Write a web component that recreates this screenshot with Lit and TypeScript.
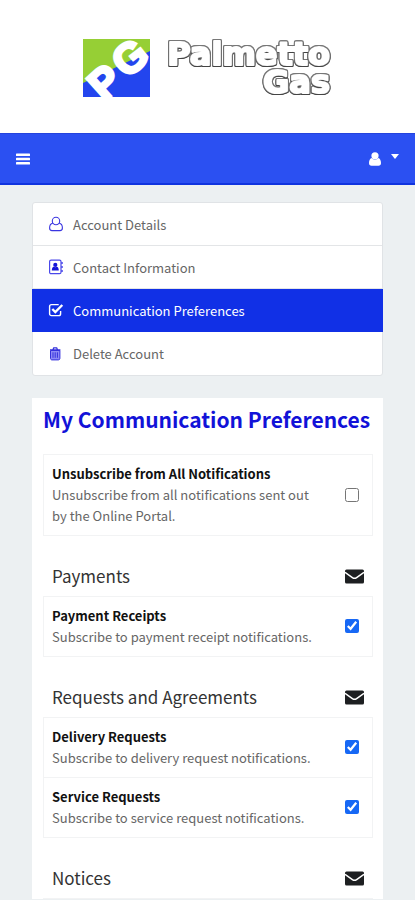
import { LitElement, html, css, svg, TemplateResult } from "lit";
import { customElement, property } from "lit/decorators.js";

const icons: Record<string, TemplateResult> = {
  bars: html`<svg width="14" height="12" viewBox="0 0 14 12" fill="#fff" aria-hidden="true">
    <rect width="14" height="2.6" rx=".6" y=".4"/><rect width="14" height="2.6" rx=".6" y="4.7"/><rect width="14" height="2.6" rx=".6" y="9"/></svg>`,
  user: html`<svg width="14" height="16" viewBox="0 0 14 16" fill="#fff" aria-hidden="true">
    <circle cx="7" cy="4.8" r="3.6"/><path d="M3.8 7C2 7.4 1 9.3 1 12c0 1.700.9 2.800 2.500 2.800h7c1.600 0 2.500-1.100 2.500-2.800 0-2.700-1-4.600-2.800-5C9.400 8 8.300 8.700 7 8.700S4.600 8 3.800 7z"/></svg>`,
  userOutline: html`<svg width="16" height="16" viewBox="0 0 16 16" fill="none" stroke="#3a35e0" stroke-width="1.1" aria-hidden="true">
    <circle cx="8" cy="5" r="3.700"/><path d="M4.800 7.200C2.700 7.500 1.600 9.400 1.600 12c0 1.600.9 2.600 2.400 2.600h8c1.500 0 2.400-1 2.400-2.600 0-2.600-1.100-4.500-3.200-4.800"/></svg>`,
  contact: html`<svg width="16" height="16" viewBox="0 0 16 16" aria-hidden="true">
    <rect x="1.600" y="1.100" width="11.400" height="13.600" rx="1.500" fill="#fff" stroke="#4a48ea" stroke-width="1.200"/>
    <path d="M14 3v2M14 7v2M14 11v2" stroke="#4a48ea" stroke-width="1.500"/>
    <circle cx="7.300" cy="5.900" r="2.100" fill="#1414d8"/><path d="M3.800 11.400c0-2.300.9-3.500 2-3.700.9.600 2.100.6 3 0 1.100.2 2 1.400 2 3.700z" fill="#1414d8"/></svg>`,
  check: html`<svg width="16" height="16" viewBox="0 0 16 16" fill="none" stroke="#fff" aria-hidden="true">
    <path d="M12.600 9v2.700c0 1.100-.8 1.900-1.900 1.900H3.500c-1.100 0-1.900-.8-1.900-1.900V4.500c0-1.100.8-1.900 1.900-1.900h7.200" stroke-width="1.400"/>
    <path d="M4.300 7l3 3 7-7" stroke-width="2.400"/></svg>`,
  trash: html`<svg width="16" height="16" viewBox="0 0 16 16" aria-hidden="true">
    <path d="M2 3.800h10.400M5 3.500l.7-1.600h3l.7 1.600" fill="none" stroke="#3430dc" stroke-width="1.200"/>
    <path d="M2.500 4.500h9.400v7.800c0 1-.6 1.600-1.500 1.600H4c-.9 0-1.500-.6-1.500-1.600z" fill="#8c8af4" stroke="#3430dc"/>
    <path d="M5 6.300v5.500M7.200 6.300v5.500M9.400 6.300v5.500" stroke="#3430dc"/></svg>`,
  mail: html`<svg class="mail" width="19" height="15" viewBox="0 0 19 15" role="img" aria-label="Email">
    <rect y=".5" width="19" height="14" rx="1.500" fill="#1d1f21"/>
    <path d="M0 3.300l7.400 5.300c1.400 1 2.800 1 4.200 0L19 3.300" fill="none" stroke="#fff" stroke-width="1.500"/></svg>`,
};

interface Option { title: string; text: string; on: boolean; }
interface Group { heading: string; options: Option[]; }

const unsubscribe: Option[] = [
  { title: "Unsubscribe from All Notifications", text: "Unsubscribe from all notifications sent out by the Online Portal.", on: false },
];
const groups: Group[] = [
  { heading: "Payments", options: [
    { title: "Payment Receipts", text: "Subscribe to payment receipt notifications.", on: true }] },
  { heading: "Requests and Agreements", options: [
    { title: "Delivery Requests", text: "Subscribe to delivery request notifications.", on: true },
    { title: "Service Requests", text: "Subscribe to service request notifications.", on: true }] },
  { heading: "Notices", options: [] },
];
const menu = [
  { icon: "userOutline", label: "Account Details" },
  { icon: "contact", label: "Contact Information" },
  { icon: "check", label: "Communication Preferences", active: true },
  { icon: "trash", label: "Delete Account" },
];

@customElement("brand-logo")
class BrandLogo extends LitElement {
  static styles = css`
    :host { display: flex; justify-content: center; }
    svg { display: block; overflow: visible; }
    .words { filter: drop-shadow(1px 0 0 #777) drop-shadow(-1px 0 0 #777) drop-shadow(0 1px 0 #444) drop-shadow(0 -1px 0 #777); }
    .word { font: 700 32px "DejaVu Sans", Verdana, sans-serif; fill: #fff; stroke: #fff; stroke-width: 2px; stroke-linejoin: round; }
    .mark { font: 700 42px "Liberation Sans", Arial, sans-serif; fill: #fff; stroke: #fff; stroke-width: 3px; }
  `;
  render() {
    return html`<svg width="252" height="62" viewBox="0 0 252 62" role="img" aria-label="Palmetto Gas">
      <rect x="1" y="1" width="67" height="58" fill="#96cf35"/>
      <path d="M1 45L68 13V59H1z" fill="#2345ee"/>
      <text class="mark" transform="translate(22 64) rotate(-42)">P</text>
      <text class="mark" transform="translate(44 41) rotate(-38)">G</text>
      <g class="words">
        ${[["Palmetto", 27], ["Gas", 55]].map(([t, y]) => svg`
          <text class="word" x="248" y=${y} text-anchor="end">${t}</text>`)}
      </g>
    </svg>`;
  }
}

@customElement("preference-list")
class PreferenceList extends LitElement {
  @property({ attribute: false }) options: Option[] = [];
  static styles = css`
    :host { display: block; border: 1px solid #f2f3f4; }
    :host([open]) { border-bottom: 0; }
    .row { display: flex; align-items: center; gap: 12px; padding: 8px 13px 9px 8px; }
    .row + .row { border-top: 1px solid #f2f3f4; }
    .copy { flex: 1; min-width: 0; padding-right: 10px; line-height: 21px; font-size: 13px; color: #666; }
    .title { display: block; color: #111; font-weight: 700; }
    .text { display: block; }
    .box { width: 14px; height: 14px; margin: 0; accent-color: #1768f5; }
  `;
  render() {
    return this.options.map((o) => html`<label class="row">
      <span class="copy"><span class="title">${o.title}</span><span class="text">${o.text}</span></span>
      <input class="box" type="checkbox" .checked=${o.on}>
    </label>`);
  }
}

@customElement("app-root")
class AppRoot extends LitElement {
  static styles = css`
    :host { display: block; min-height: 100vh; background: #ecf0f2; font-family: "Noto Sans CJK JP", "Noto Sans", sans-serif; font-size: 13px; }
    * { box-sizing: border-box; }
    svg { display: block; flex: none; }
    .brand { background: #fff; padding: 38px 16px 33px; }
    .bar { display: flex; justify-content: space-between; align-items: center; height: 52px; padding: 0 16px; background: #2b50f2; border-top: 1px solid #2443dd; border-bottom: 2px solid #1034df; }
    .tool { display: flex; align-items: center; gap: 9px; border: 0; padding: 0; background: none; }
    .caret { width: 0; border: 4px solid transparent; border-top: 5px solid #fff; border-bottom: 0; margin-bottom: 4px; }
    main { padding: 17px 32px 0; }
    .menu { border: 1px solid #e0e3e6; border-radius: 3px; background: #fff; }
    .item { display: flex; align-items: center; gap: 9px; height: 43px; padding: 0 15px; color: #666; text-decoration: none; border-bottom: 1px solid #e3e5e7; }
    .item:last-child { border-bottom: 0; }
    .item.active { margin: 0 -1px; padding: 0 16px; background: #1130e6; border-color: #1130e6; color: #fff; }
    .card { margin-top: 22px; padding: 0 10px 0 11px; background: #fff; }
    h1 { margin: 0 0 13px; font-size: 21px; line-height: 43px; font-weight: 700; color: #1212d8; white-space: nowrap; }
    .head { display: flex; align-items: center; justify-content: space-between; margin-top: 20px; padding: 0 9px; }
    h2 { margin: 0; font-size: 17px; line-height: 40px; font-weight: 400; color: #333; }
  `;
  render() {
    return html`
      <header>
        <div class="brand"><brand-logo></brand-logo></div>
        <nav class="bar">
          <button class="tool" aria-label="Menu">${icons.bars}</button>
          <button class="tool" aria-label="Account">${icons.user}<span class="caret"></span></button>
        </nav>
      </header>
      <main>
        <nav class="menu">
          ${menu.map((m) => html`<a class="item ${m.active ? "active" : ""}" href="#">${icons[m.icon]}<span>${m.label}</span></a>`)}
        </nav>
        <section class="card">
          <h1>My Communication Preferences</h1>
          <preference-list .options=${unsubscribe}></preference-list>
          ${groups.map((g) => html`
            <div class="head"><h2>${g.heading}</h2>${icons.mail}</div>
            <preference-list ?open=${!g.options.length} .options=${g.options}></preference-list>`)}
        </section>
      </main>`;
  }
}
